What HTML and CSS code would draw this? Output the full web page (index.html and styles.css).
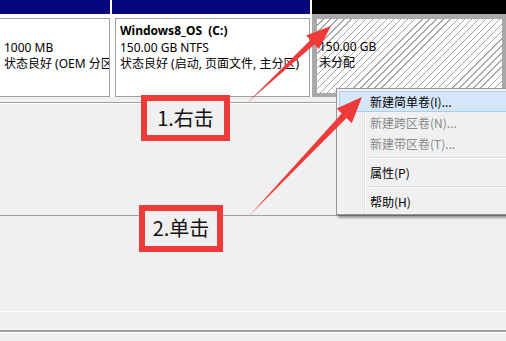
FILE: index.html
```html
<html>
	<head>
		<meta charset="utf-8">
		<title>磁盘管理</title>
		<link rel="stylesheet" href="styles.css">
	</head>
	<body>
		<div id="screen">

			<div class="volumes">
				<div class="vol vol-oem">
					<div class="vol-head"></div>
					<div class="vol-body">
						<div class="vol-box">
							<div class="vol-line">&nbsp;</div>
							<div class="vol-line">1000 MB</div>
							<div class="vol-line">状态良好 (OEM 分区)</div>
						</div>
					</div>
				</div>
				<div class="vol vol-os">
					<div class="vol-head"></div>
					<div class="vol-body">
						<div class="vol-box">
							<div class="vol-line vol-name">Windows8_OS&nbsp;&nbsp;(C:)</div>
							<div class="vol-line">150.00 GB NTFS</div>
							<div class="vol-line">状态良好 (启动, 页面文件, 主分区)</div>
						</div>
					</div>
				</div>
				<div class="vol vol-free">
					<div class="vol-head"></div>
					<div class="vol-body">
						<div class="vol-box">
							<div class="vol-line">&nbsp;</div>
							<div class="vol-line">150.00 GB</div>
							<div class="vol-line">未分配</div>
						</div>
					</div>
				</div>
			</div>

			<div class="divider"></div>
			<div class="pane"></div>
			<div class="pane pane-low"></div>
			<div class="statusbar"></div>

			<!-- context menu -->
			<ul class="menu">
				<li class="item active">新建简单卷(I)...</li>
				<li class="item disabled">新建跨区卷(N)...</li>
				<li class="item disabled">新建带区卷(T)...</li>
				<li class="sep"></li>
				<li class="item">属性(P)</li>
				<li class="sep"></li>
				<li class="item">帮助(H)</li>
			</ul>

			<!-- annotations -->
			<div class="callout callout-1">1.右击</div>
			<div class="callout callout-2">2.单击</div>

			<svg class="arrows" width="506" height="341" viewBox="0 0 506 341">
				<polygon points="247,103 314.6,44.2 318.8,49.2 331,26 306,35.4 310.4,39.9"/>
				<polygon points="249,216 346.5,117.9 351.8,123.2 362,97 336.6,108.6 341.7,113.4"/>
			</svg>

		</div>
	</body>
</html>
```

FILE: styles.css
```css
html,body{
	margin: 0px;
	padding: 0px;
	width: 100%;
	height: 100%;
}

body{
	background-color: #F0F0F0;
	font-family: "Noto Sans", "Noto Sans CJK SC", sans-serif;
	font-size: 12px;
	color: #000;
}

#screen{
	position: relative;
	width: 506px;
	height: 341px;
	overflow: hidden;
}

/* partition row */

.volumes{
	display: flex;
	gap: 2px;
	height: 97px;
	background-color: #FFF;
}

.vol{
	display: flex;
	flex-direction: column;
}

.vol-oem{ width: 110px; }
.vol-os{ width: 198px; }
.vol-free{ flex: 1; }

.vol-head{
	height: 14px;
	background-color: #06067E;
}

.vol-free .vol-head{
	background-color: #000;
}

.vol-body{
	flex: 1;
	display: flex;
	padding: 4px 0px 0px 0px;
}

.vol-os .vol-body{
	padding-left: 3px;
}

.vol-box{
	flex: 1;
	box-sizing: border-box;
	border: 1px solid #A0A0A0;
	padding: 4px 4px 0px 4px;
	overflow: hidden;
	white-space: nowrap;
}

.vol-oem .vol-box{
	border-left: none;
	padding-left: 4px;
}

.vol-line{
	line-height: 16.5px;
}

.vol-name{
	font-weight: bold;
}

.vol-free .vol-body{
	background-color: #A9A9A9;
	padding: 5px 4px 4px 5px;
}

.vol-free .vol-box{
	border: none;
	padding-top: 3px;
	padding-left: 2px;
	background: repeating-linear-gradient(135deg, #FFF 0px, #FFF 4px, #A8A8A8 4px, #A8A8A8 5px);
}

/* lower panes */

.divider{
	margin-top: 5px;
	border-top: 1px solid #A0A0A0;
	border-bottom: 1px solid #FFF;
}

.pane{
	height: 111px;
	border-bottom: 1px solid #A0A0A0;
}

.pane-low{
	height: 95px;
	border-bottom: 1px solid #FFF;
}

.statusbar{
	margin-top: 18px;
	border-top: 2px solid #A0A0A0;
	border-bottom: 1px solid #FFF;
}

/* context menu */

.menu{
	position: absolute;
	left: 336px;
	top: 88px;
	width: 190px;
	margin: 0px;
	padding: 2px;
	list-style: none;
	background-color: #F0F0F0;
	border: 1px solid #979797;
	box-shadow: 2px 3px 2px rgba(0,0,0,0.35);
	background-image: linear-gradient(to right, transparent 27px, #E2E3E3 27px, #E2E3E3 28px, #FFF 28px, #FFF 29px, transparent 29px);
}

.item{
	box-sizing: border-box;
	height: 21px;
	line-height: 19px;
	padding-left: 30px;
	border: 1px solid transparent;
	font-family: "Noto Sans CJK SC", sans-serif;
}

.item.active{
	background-color: #D5E6F8;
	border-color: #A9CDF2;
}

.item.disabled{
	color: #8A8A8A;
}

.sep{
	height: 1px;
	margin: 3px 0px 3px 30px;
	border-top: 1px solid #DADADA;
	background-color: #FFF;
}

/* annotations */

.callout{
	position: absolute;
	box-sizing: border-box;
	border: 6px solid #EF3A3A;
	background-color: #F0F0F0;
	font-family: "Noto Sans CJK SC", sans-serif;
	font-size: 20px;
	line-height: 34px;
	text-align: center;
	color: #111;
}

.callout-1{
	left: 141px;
	top: 95px;
	width: 89px;
	height: 46px;
}

.callout-2{
	left: 139px;
	top: 205px;
	width: 84px;
	height: 47px;
}

.arrows{
	position: absolute;
	left: 0px;
	top: 0px;
}

.arrows polygon{
	fill: #EF3A3A;
}
```
